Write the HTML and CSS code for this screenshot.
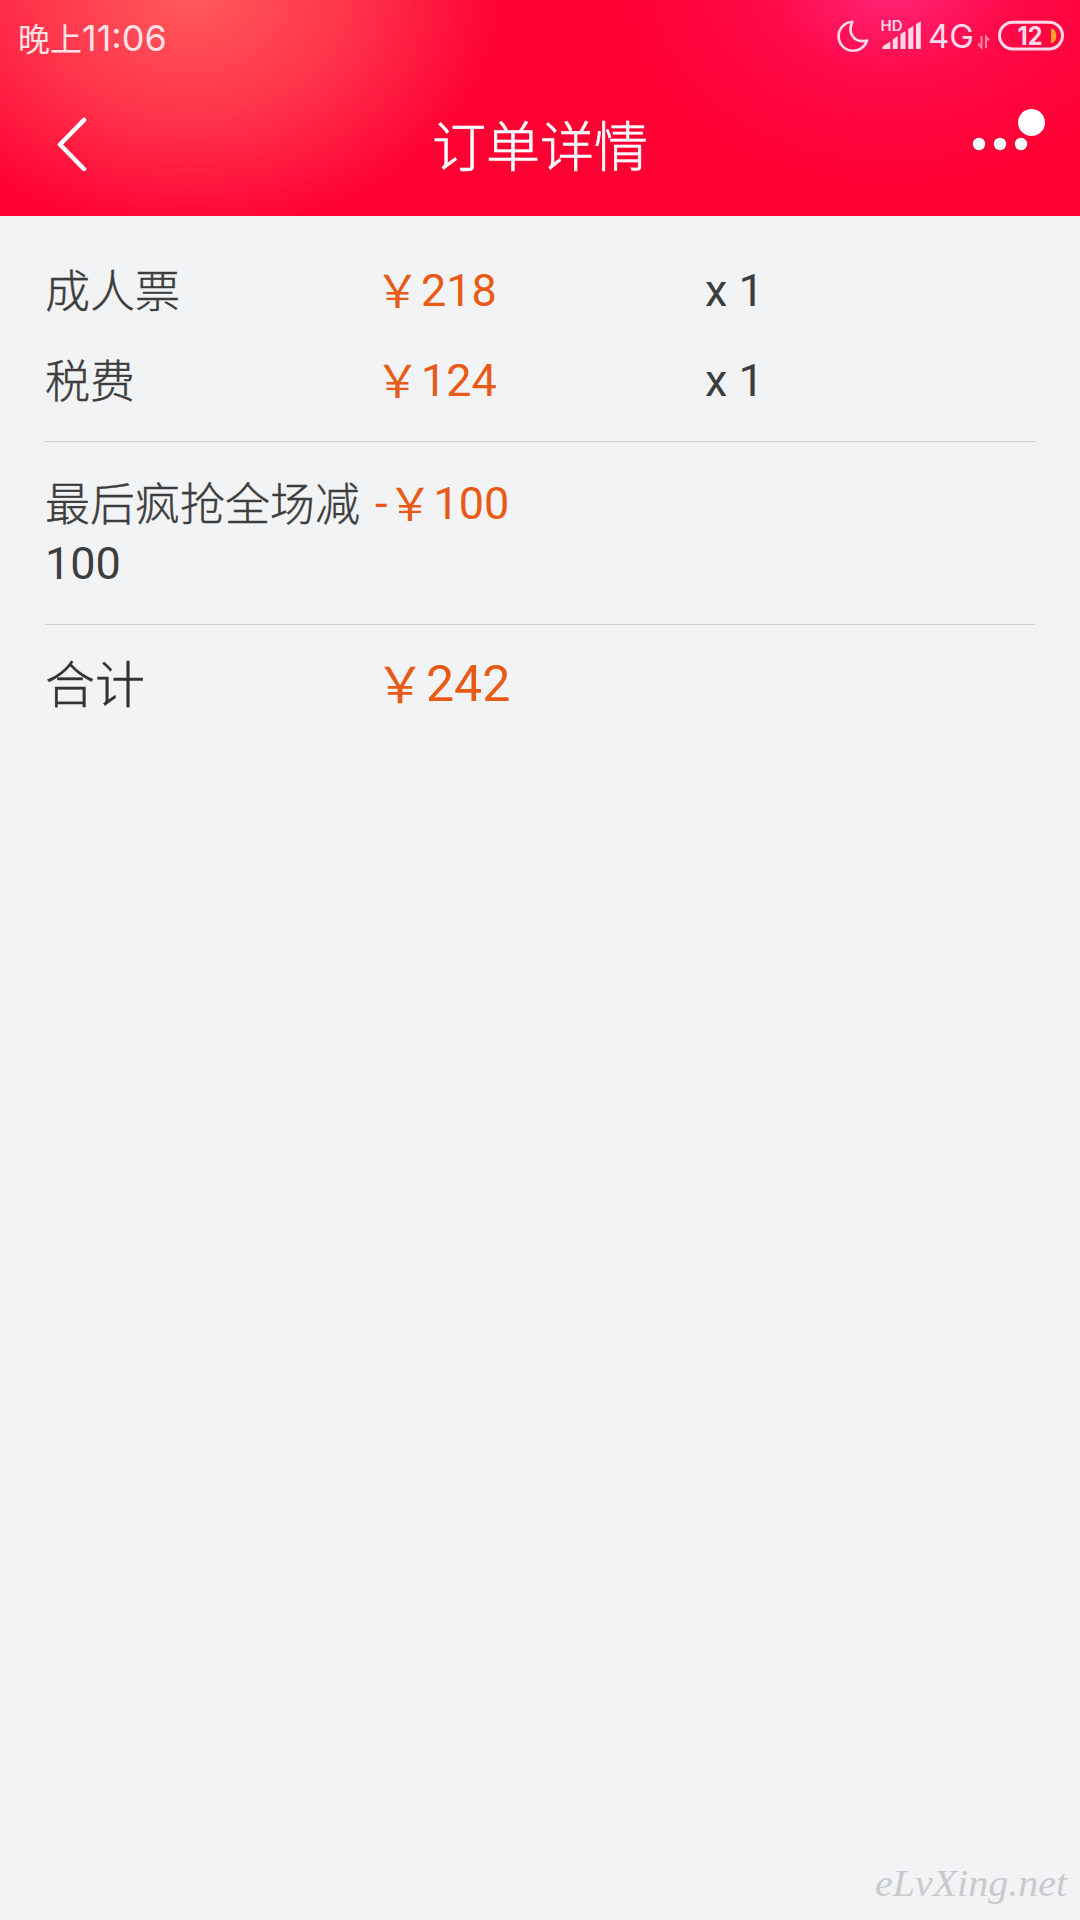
FILE: index.html
```html
<!DOCTYPE html>
<html lang="zh-CN">
<head>
<meta charset="utf-8">
<title>订单详情</title>
<link rel="stylesheet" href="styles.css">
</head>
<body>
<header class="header">
  <div class="status">
    <div class="clock"><span class="period">晚上</span><span class="time">11:06</span></div>
    <svg class="indicators" width="240" height="60" viewBox="0 0 240 60">
      <path class="moon" d="M20.500 21.800A14.500 14.500 0 1 0 35 40.500C22 43.500 15 33 20.500 21.800Z"/>
      <text class="hd" x="48.500" y="31" textLength="22" lengthAdjust="spacingAndGlyphs">HD</text>
      <path class="solid" d="M50.500 49V46.500L58.300 41.500V49ZM60.700 39.500L65.700 36V49H60.700ZM68.500 34L73.500 31V49H68.500ZM76.300 29L81.300 26V49H76.300ZM84 24L88.800 21.500V49H84Z"/>
      <text class="network" x="96" y="48.300" textLength="46" lengthAdjust="spacingAndGlyphs">4G</text>
      <path class="traffic" d="M149.500 36V47.500L146 43.500M154 48V37L157 40.500"/>
      <rect class="shell" x="167.500" y="22.200" width="63" height="26.800" rx="13.400"/>
      <path class="charge" d="M219 28.500C226 28.500 226 43 219 43Z"/>
      <text class="level" x="185.500" y="44.700" textLength="25" lengthAdjust="spacingAndGlyphs">12</text>
    </svg>
  </div>
  <nav class="nav">
    <svg class="back" width="30" height="54" viewBox="0 0 30 54"><path d="M27 3L3 27.500L27 52"/></svg>
    <h1 class="title">订单详情</h1>
    <svg class="more" width="74" height="44" viewBox="0 0 74 44">
      <circle cx="7" cy="36" r="6.200"/><circle cx="28" cy="36" r="6.200"/><circle cx="49" cy="36" r="6.200"/><circle cx="59.500" cy="14.500" r="13.500"/>
    </svg>
  </nav>
</header>
<main class="bill">
  <section class="group">
    <div class="row"><span class="label">成人票</span><span class="price"><span class="yen">￥</span>218</span><span class="qty">x 1</span></div>
    <div class="row"><span class="label">税费</span><span class="price"><span class="yen">￥</span>124</span><span class="qty">x 1</span></div>
  </section>
  <section class="group discount">
    <div class="row"><span class="label">最后疯抢全场减<span class="amount">100</span></span><span class="price">-<span class="yen">￥</span>100</span></div>
  </section>
  <section class="total">
    <div class="row"><span class="label">合计</span><span class="price"><span class="yen">￥</span>242</span></div>
  </section>
</main>
<footer class="footer">
  <svg width="210" height="60" viewBox="0 0 210 60"><text class="mark" x="5" y="46" textLength="192" lengthAdjust="spacingAndGlyphs">eLvXing.net</text></svg>
</footer>
</body>
</html>
```
FILE: styles.css
```css
* { box-sizing: border-box; }
body {
  margin: 0;
  min-height: 1920px;
  display: flex;
  flex-direction: column;
  background: #f2f3f5;
  color: #3d3d3d;
  font: 45px/60px Roboto, "Noto Sans CJK SC", sans-serif;
}
.header {
  height: 216px;
  color: #fff;
  background:
    radial-gradient(ellipse 315px 240px at 190px -5px, #ff5a5e, rgba(255, 62, 80, .85) 50%, rgba(255, 0, 51, 0)),
    radial-gradient(ellipse 270px 200px at 890px -15px, #ff267a, rgba(255, 16, 88, .6) 45%, rgba(255, 0, 51, 0)),
    #ff0033;
}
.status {
  height: 76px;
  display: flex;
  justify-content: space-between;
  padding: 0 8px 0 18px;
}
.clock { display: flex; color: #ffe1e5; }
.period { font: 400 32px/74px "Noto Sans CJK SC", sans-serif; }
.time { font-family: Inter, sans-serif; font-size: 36px; line-height: 76px; }
.moon { fill: none; stroke: #ffd9e9; stroke-width: 2.6; stroke-linejoin: round; }
.solid, .hd, .network, .level { fill: #ffd9e9; }
.hd { font: 600 14px Inter, sans-serif; }
.network { font: 400 33px Inter, sans-serif; }
.traffic { fill: none; stroke: #ff85aa; stroke-width: 2; }
.shell { fill: none; stroke: #ffd9e9; stroke-width: 3; }
.charge { fill: #f9a52b; }
.level { font: 700 26px Inter, sans-serif; }
.nav {
  height: 140px;
  display: grid;
  grid-template-columns: 1fr auto 1fr;
  padding: 0 34px 0 57px;
}
.back { margin-top: 41px; fill: none; stroke: #fff; stroke-width: 4.5; stroke-linecap: round; stroke-linejoin: round; }
.title {
  margin: 28px 0 0 -23px;
  font: 300 54px/80px "Noto Sans CJK SC", sans-serif;
  -webkit-text-stroke: .6px;
}
.more { margin-top: 32px; justify-self: end; fill: #fff; }
.bill { flex: 1; padding: 45px 45px 0; }
.group { padding-bottom: 30px; border-bottom: 1px solid #d0d1d3; }
.row {
  display: grid;
  grid-template-columns: 330px 330px 1fr;
}
.row + .row { margin-top: 30px; }
.discount { padding-top: 32px; }
.label { font-weight: 300; -webkit-text-stroke: .4px; padding-top: 2px; margin-bottom: -2px; }
.amount { display: block; margin-top: -2px; font-weight: 400; -webkit-text-stroke: 0; }
.discount .label { margin-bottom: 0; }
.price { color: #e95a17; }
.yen { display: inline-block; width: 46px; font-family: "Noto Sans CJK SC", sans-serif; line-height: 1; vertical-align: -2px; }
.price, .qty { height: 60px; }
.total { padding-top: 29px; font-size: 50px; }
.total .label { color: #333; }
.total .yen { width: 51px; }
.footer { height: 70px; display: flex; justify-content: flex-end; }
.mark { fill: #c9cacc; font: italic 38px "Liberation Serif", serif; }
```
